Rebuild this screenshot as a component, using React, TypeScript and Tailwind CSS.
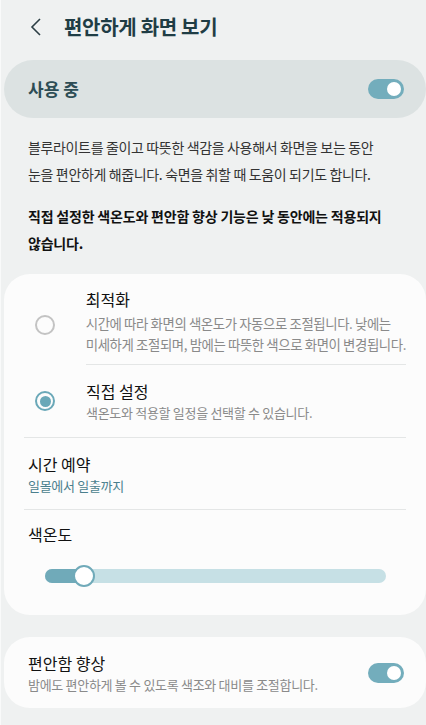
import React from "react";

const font = { fontFamily: '"Noto Sans CJK KR", "Noto Sans", sans-serif' };

function Toggle() {
  return (
    <div className="relative h-[20px] w-[36px] rounded-full bg-[#73adbc]">
      <div className="absolute right-[3px] top-[3px] h-[14px] w-[14px] rounded-full bg-white" />
    </div>
  );
}

function Radio({ checked }: { checked: boolean }) {
  if (checked) {
    return (
      <div className="flex h-[20px] w-[20px] items-center justify-center rounded-full border-[2px] border-[#6aa8b8]">
        <div className="h-[11px] w-[11px] rounded-full bg-[#6aa8b8]" />
      </div>
    );
  }
  return <div className="h-[20px] w-[20px] rounded-full border-[2px] border-[#c3c3c3]" />;
}

export default function App() {
  return (
    <div className="min-h-[725px] w-[426px] overflow-hidden bg-[#eff1f1]" style={font}>
      <div className="flex h-[725px] flex-col border-l border-[#f9fafa] pl-[3px]">
        {/* header */}
        <div className="flex h-[54px] items-center pl-[25px]">
          <svg width="14" height="20" viewBox="0 0 14 20" className="mr-[21px]">
            <path d="M11 2 L3 10 L11 18" fill="none" stroke="#2c3e44" strokeWidth="1.6" />
          </svg>
          <h1 className="text-[20px] font-bold tracking-[-0.3px] text-[#1f3d45]">편안하게 화면 보기</h1>
        </div>

        {/* 사용 중 */}
        <div className="mt-[6px] flex h-[58px] items-center justify-between rounded-full bg-[#dce2e2] pl-[24px] pr-[22px]">
          <span className="text-[17px] font-bold text-[#2d4d55]">사용 중</span>
          <Toggle />
        </div>

        {/* description */}
        <div className="px-[24px] pt-[16px] text-[14px] leading-[27px] tracking-[-0.35px] text-[#333]">
          <p>블루라이트를 줄이고 따뜻한 색감을 사용해서 화면을 보는 동안</p>
          <p>눈을 편안하게 해줍니다. 숙면을 취할 때 도움이 되기도 합니다.</p>
          <p className="mt-[15px] font-bold tracking-[-0.2px] text-[#111]">
            직접 설정한 색온도와 편안함 향상 기능은 낮 동안에는 적용되지
            <br />
            않습니다.
          </p>
        </div>

        {/* main card */}
        <div className="mt-[17px] rounded-[26px] bg-[#fcfcfc]">
          <div className="flex">
            <div className="flex w-[82px] items-center justify-center pb-[2px] pt-[13px]">
              <Radio checked={false} />
            </div>
            <div className="mr-[20px] flex-1 border-b border-[#e4e6e6] pb-[9px] pt-[13px]">
              <div className="text-[16px] leading-[24px] text-[#111]">최적화</div>
              <div className="mt-[2px] whitespace-nowrap text-[13.4px] leading-[21px] tracking-[-0.4px] text-[#8a8a8a]">
                시간에 따라 화면의 색온도가 자동으로 조절됩니다. 낮에는
                <br />
                미세하게 조절되며, 밤에는 따뜻한 색으로 화면이 변경됩니다.
              </div>
            </div>
          </div>
          <div className="mx-[20px] flex items-center border-b border-[#e4e6e6] pb-[14px] pt-[14px]">
            <div className="flex w-[42px] justify-center">
              <Radio checked={true} />
            </div>
            <div className="ml-[20px] flex-1">
              <div className="text-[16px] leading-[24px] text-[#111]">직접 설정</div>
              <div className="text-[13px] leading-[20px] tracking-[-0.3px] text-[#8a8a8a]">
                색온도와 적용할 일정을 선택할 수 있습니다.
              </div>
            </div>
          </div>
          <div className="mx-[20px] border-b border-[#e4e6e6] pb-[13px] pl-[4px] pt-[14px]">
            <div className="text-[16px] leading-[24px] text-[#111]">시간 예약</div>
            <div className="text-[13px] leading-[20px] tracking-[-0.3px] text-[#4a7f8d]">
              일몰에서 일출까지
            </div>
          </div>
          <div className="px-[24px] pb-[32px] pt-[12px]">
            <div className="text-[16px] leading-[24px] text-[#111]">색온도</div>
            <div className="relative ml-[17px] mt-[23px] h-[14px] w-[341px] rounded-full bg-[#c6e0e5]">
              <div className="absolute left-0 top-0 h-[14px] w-[40px] rounded-full bg-[#70aab9]" />
              <div className="absolute left-[28px] top-[-4px] h-[22px] w-[22px] rounded-full border-[2px] border-[#70aab9] bg-white" />
            </div>
          </div>
        </div>

        {/* 편안함 향상 */}
        <div className="mt-[22px] flex h-[71px] items-center justify-between rounded-[26px] bg-[#fcfcfc] pl-[24px] pr-[22px]">
          <div>
            <div className="text-[16px] leading-[24px] text-[#111]">편안함 향상</div>
            <div className="text-[13px] leading-[20px] tracking-[-0.3px] text-[#8a8a8a]">
              밤에도 편안하게 볼 수 있도록 색조와 대비를 조절합니다.
            </div>
          </div>
          <Toggle />
        </div>
      </div>
    </div>
  );
}
